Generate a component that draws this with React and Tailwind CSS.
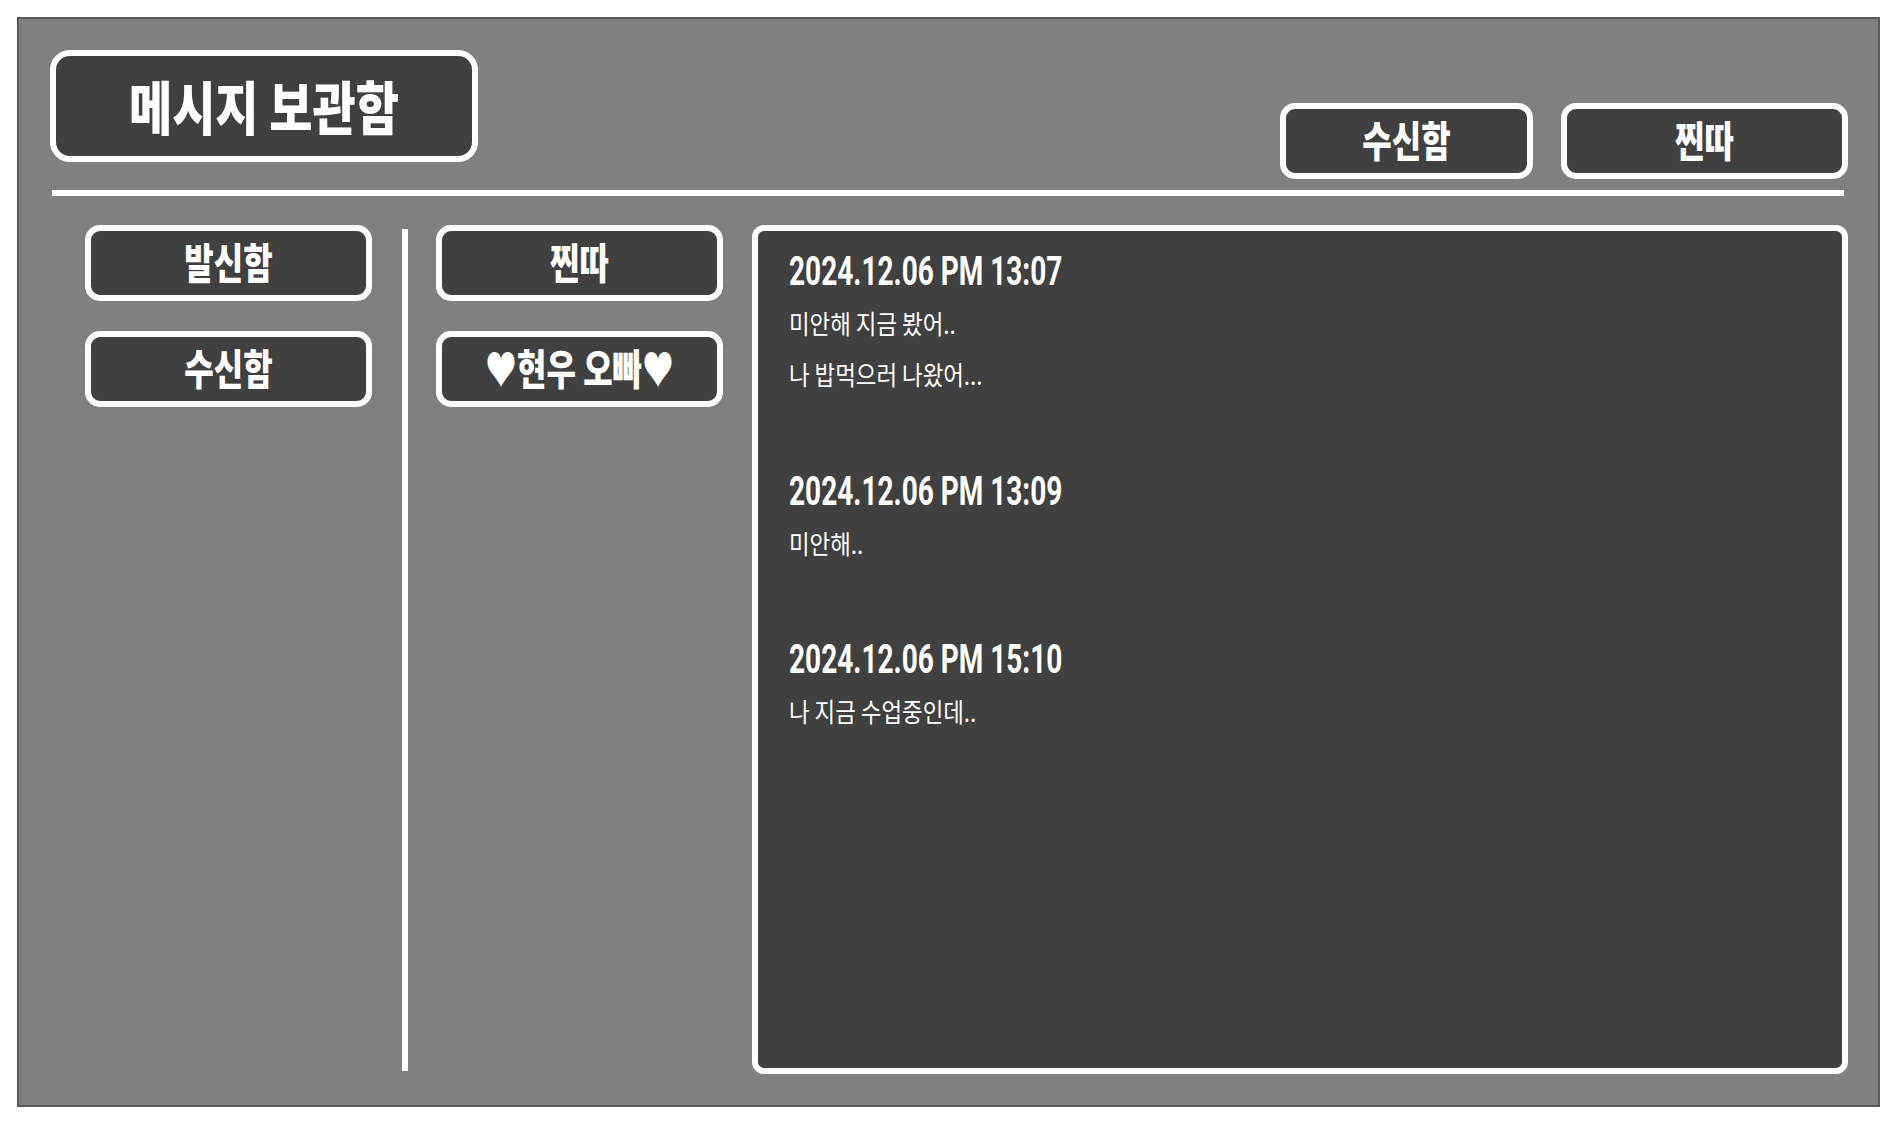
import React from "react";

const messages = [
  { date: "2024.12.06 PM 13:07", lines: ["미안해 지금 봤어..", "나 밥먹으러 나왔어..."] },
  { date: "2024.12.06 PM 13:09", lines: ["미안해.."] },
  { date: "2024.12.06 PM 15:10", lines: ["나 지금 수업중인데.."] },
];

function Btn({ children, className = "" }) {
  return (
    <div
      className={`flex items-center justify-center rounded-[15px] border-[6px] border-white bg-[#404040] ${className}`}
    >
      <span className="inline-block -translate-y-[2px] scale-y-[1.3] font-['Noto_Sans_CJK_KR',sans-serif] text-[32px] font-black leading-none text-white">
        {children}
      </span>
    </div>
  );
}

export default function App() {
  return (
    <div className="h-[1125px] w-[1898px] bg-white pl-[17px] pt-[17px]">
      <div className="flex h-[1090px] w-[1863px] flex-col border-2 border-[#595959] bg-[#808080] pl-[31px] pr-[30px] pt-[31px]">
        {/* header */}
        <div className="flex items-start justify-between">
          <div className="flex h-[112px] w-[428px] items-center justify-center rounded-[20px] border-[6px] border-white bg-[#404040]">
            <span className="inline-block -translate-y-[2px] scale-y-[1.24] font-['Noto_Sans_CJK_KR',sans-serif] text-[47px] font-black leading-none text-white">
              메시지 보관함
            </span>
          </div>
          <div className="mt-[53px] flex gap-[28px]">
            <Btn className="h-[76px] w-[253px]">수신함</Btn>
            <Btn className="h-[76px] w-[287px]">찐따</Btn>
          </div>
        </div>

        {/* divider */}
        <div className="ml-[2px] mr-[4px] mt-[11px] h-[6px] bg-white" />

        {/* body */}
        <div className="mt-[29px] flex">
          <div className="ml-[35px] flex w-[287px] flex-col gap-[30px]">
            <Btn className="h-[76px]">발신함</Btn>
            <Btn className="h-[76px]">수신함</Btn>
          </div>
          <div className="ml-[30px] mt-[4px] h-[842px] w-[6px] bg-white" />
          <div className="ml-[28px] flex w-[287px] flex-col gap-[30px]">
            <Btn className="h-[76px]">찐따</Btn>
            <Btn className="h-[76px]">♥현우 오빠♥</Btn>
          </div>
          <div className="ml-[29px] flex h-[849px] w-[1096px] flex-col gap-[69.5px] rounded-[12px] border-[6px] border-white bg-[#404040] pl-[31px] pt-[21px]">
            {messages.map((m) => (
              <div key={m.date} className="flex flex-col">
                <div className="h-[40px]">
                  <span className="inline-block scale-y-[1.45] font-['Roboto',sans-serif] text-[28px] font-bold leading-[40px] text-white">
                    {m.date}
                  </span>
                </div>
                <div className="mt-[8px] flex flex-col">
                  {m.lines.map((l) => (
                    <div key={l} className="h-[51px]">
                      <span className="inline-block -translate-y-[2px] scale-y-[1.15] font-['Noto_Sans_CJK_KR',sans-serif] text-[22.4px] leading-[51px] text-white">
                        {l}
                      </span>
                    </div>
                  ))}
                </div>
              </div>
            ))}
          </div>
        </div>
      </div>
    </div>
  );
}
